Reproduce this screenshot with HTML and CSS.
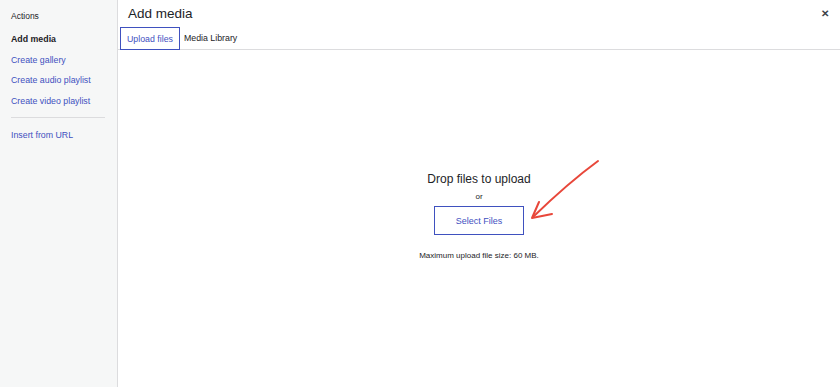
FILE: index.html
```html
<!DOCTYPE html>
<html lang="en">
<head>
    <meta charset="UTF-8">
    <meta name="viewport" content="width=device-width, initial-scale=1.0">
    <title>Add media</title>
    <link rel="stylesheet" href="styles.css">
</head>
<body>
    <div class="modal">
        <div class="sidebar">
            <div class="heading">Actions</div>
            <a class="item active">Add media</a>
            <a class="item">Create gallery</a>
            <a class="item">Create audio playlist</a>
            <a class="item">Create video playlist</a>
            <div class="separator"></div>
            <a class="item">Insert from URL</a>
        </div>
        <div class="main">
            <div class="title-row">
                <h1>Add media</h1>
                <span class="close">&#x2715;</span>
            </div>
            <div class="tabs">
                <a class="tab current">Upload files</a>
                <a class="tab">Media Library</a>
            </div>
            <div class="uploader">
                <div class="drop">Drop files to upload</div>
                <div class="or">or</div>
                <button class="select">Select Files</button>
                <div class="max">Maximum upload file size: 60 MB.</div>

                <!-- annotation arrow -->
                <svg class="arrow" width="80" height="70" viewBox="0 0 80 70">
                    <path d="M78 2 Q48 24 13 58" fill="none" stroke="#e8473a" stroke-width="2" stroke-linecap="round"/>
                    <path d="M19 43 L12 59 L32 55" fill="none" stroke="#e8473a" stroke-width="2" stroke-linecap="round" stroke-linejoin="round"/>
                </svg>
            </div>
        </div>
    </div>
</body>
</html>
```

FILE: styles.css
```css
body {
    font-family: "Liberation Sans", Arial, sans-serif;
    margin: 0;
    padding: 0;
    background-color: #fff;
    color: #1d2327;
}
.modal {
    display: flex;
    width: 840px;
    height: 387px;
    overflow: hidden;
}
.sidebar {
    width: 106px;
    flex-shrink: 0;
    background-color: #f6f7f7;
    border-right: 1px solid #dcdcde;
    padding: 11px 0 0 11px;
    box-sizing: content-box;
    display: flex;
    flex-direction: column;
}
.heading {
    font-size: 8.5px;
    color: #1d2327;
    height: 12px;
    margin-bottom: 10px;
}
.item {
    font-size: 8.8px;
    color: #3f51bf;
    height: 12px;
    line-height: 12px;
    margin-bottom: 8.5px;
}
.item.active {
    color: #1d2327;
    font-weight: bold;
}
.separator {
    width: 94px;
    height: 1px;
    background-color: #dcdcde;
    margin: 2px 0 11px 0;
}
.main {
    flex: 1;
    display: flex;
    flex-direction: column;
    position: relative;
}
.title-row {
    display: flex;
    justify-content: space-between;
    align-items: center;
    height: 27px;
    padding: 0 11px 0 10px;
}
h1 {
    margin: 0;
    font-size: 13.5px;
    font-weight: normal;
    color: #1d2327;
}
.close {
    font-size: 10px;
    font-weight: bold;
    color: #3c434a;
}
.tabs {
    display: flex;
    align-items: stretch;
    height: 22px;
    border-bottom: 1px solid #dcdcde;
    padding-left: 2px;
}
.tab {
    font-size: 8.8px;
    color: #1d2327;
    display: flex;
    align-items: center;
    padding: 0 4px;
}
.tab.current {
    color: #3f51bf;
    border: 1px solid #3f51bf;
    padding: 0 6px;
    height: 21px;
}
.uploader {
    flex: 1;
    display: flex;
    flex-direction: column;
    align-items: center;
    padding-top: 122px;
    position: relative;
}
.drop {
    font-size: 12px;
    color: #1d2327;
}
.or {
    font-size: 8px;
    margin-top: 6px;
    color: #1d2327;
}
.select {
    margin-top: 5px;
    width: 90px;
    height: 29px;
    background: #fff;
    border: 1px solid #3f51bf;
    color: #3f51bf;
    font-family: inherit;
    font-size: 9px;
    padding: 0;
}
.max {
    font-size: 8px;
    margin-top: 16px;
    color: #1d2327;
}
.arrow {
    position: absolute;
    left: 402px;
    top: 109px;
}
```
